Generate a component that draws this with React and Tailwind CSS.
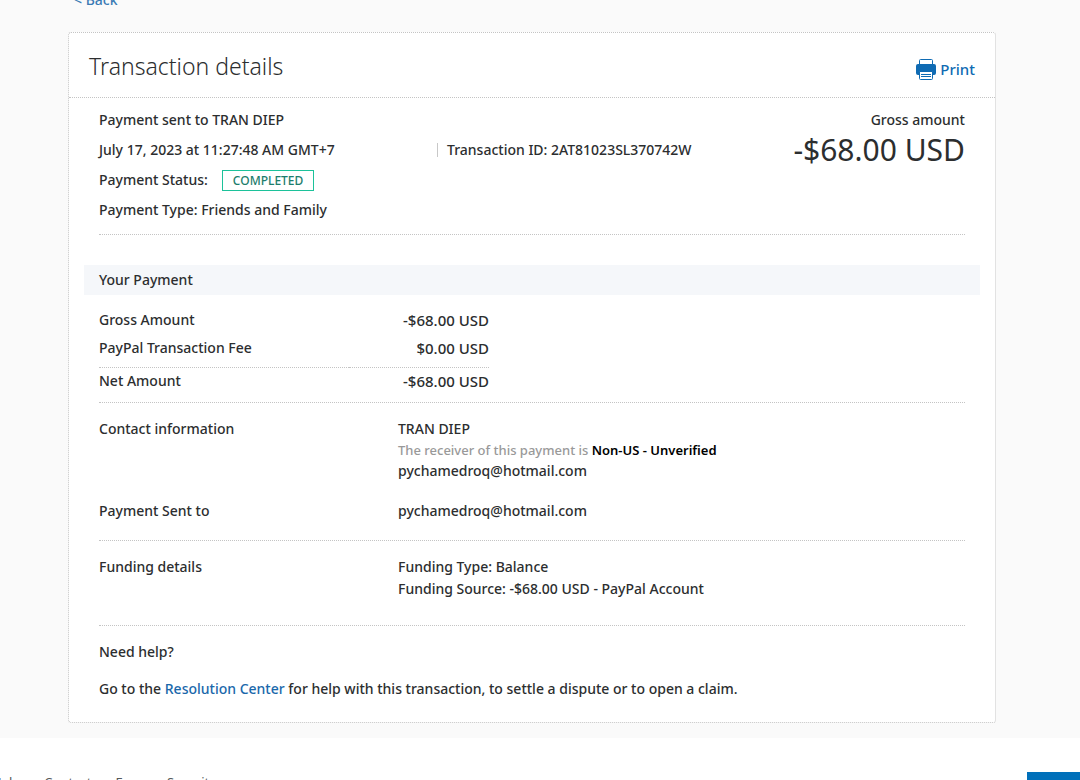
const payment = [
  { label: "Gross Amount", value: "-$68.00 USD" },
  { label: "PayPal Transaction Fee", value: "$0.00 USD" },
];

const footerLinks = ["Help", "Contact", "Fees", "Security"];

export default function App() {
  return (
    <div className="h-screen overflow-hidden bg-white font-['Noto_Sans',sans-serif] text-[14px] leading-5 font-medium text-[#2c2e2f]">
      <main className="bg-[#fafafa] pl-[68px] pr-[84px] pb-[15px]">
        <nav className="-mt-2.5 pl-1.5 pb-[22px]">
          <a href="#back" className="block w-fit text-[#3b7bb5]">&lt; Back</a>
        </nav>

        <section className="rounded-[3px] border border-dotted border-[#c4c4c4] border-r-[#e2e2e2] [border-right-style:solid] bg-white">
          <header className="flex h-[65px] items-center justify-between border-b border-dotted border-[#c4c4c4] px-5">
            <h1 className="pt-0.5 text-[23px] leading-8 font-light">Transaction details</h1>
            <button type="button" className="flex items-center gap-1 pt-2 text-[15px] text-[#0f6bb3]">
              <PrinterIcon />
              Print
            </button>
          </header>

          <div className="px-[30px] pt-3 pb-[23px]">
            <Summary />
            <YourPayment />
            <Contact />
            <Funding />

            <div className="pt-4">
              <h2>Need help?</h2>
              <p className="mt-[17px]">
                Go to the <a href="#resolution" className="text-[#1a68ab]">Resolution Center</a> for help with this transaction, to settle a dispute or to open a claim.
              </p>
            </div>
          </div>
        </section>
      </main>

      <footer className="flex justify-between pt-[34px]">
        <ul className="-ml-2 flex gap-6 text-[13px] font-normal text-[#55585a]">
          {footerLinks.map(name => (
            <li key={name}><a href="#footer">{name}</a></li>
          ))}
        </ul>
        <div className="h-10 w-[53px] bg-[#0070ba]" />
      </footer>
    </div>
  );
}

function Summary() {
  return (
    <div className="flex justify-between border-b border-dotted border-[#c4c4c4] pb-[14px]">
      <div className="flex flex-col gap-2.5">
        <p>Payment sent to TRAN DIEP</p>
        <div className="flex">
          <p className="w-[338px]">July 17, 2023 at 11:27:48 AM GMT+7</p>
          <p className="flex items-center gap-[9px]">
            <span className="h-3.5 w-px bg-[#c8c8c8]" />
            Transaction ID: 2AT81023SL370742W
          </p>
        </div>
        <p className="flex h-5 items-center">
          Payment Status:
          <span className="ml-3.5 border border-[#1cc29a] px-2.5 text-[12px] leading-[19px] text-[#1d7d6c]">COMPLETED</span>
        </p>
        <p>Payment Type: Friends and Family</p>
      </div>
      <div className="text-right">
        <p>Gross amount</p>
        <p className="text-[30px] leading-10 font-normal">-$68.00 USD</p>
      </div>
    </div>
  );
}

function YourPayment() {
  return (
    <div className="border-b border-dotted border-[#c4c4c4] pt-[30px] pb-[7px]">
      <h2 className="-mx-[15px] bg-[#f5f7fa] px-[15px] py-[5px]">Your Payment</h2>
      <table className="mt-[11px] w-[390px]">
        <tbody>
          {payment.map(p => (
            <tr key={p.label}>
              <th scope="row" className="h-7 text-left font-medium">{p.label}</th>
              <td className="text-right text-[15px]">{p.value}</td>
            </tr>
          ))}
        </tbody>
        <tfoot>
          <tr><td colSpan={2} className="h-[5px] border-b border-dotted border-[#c4c4c4]" /></tr>
          <tr>
            <th scope="row" className="h-7 text-left font-medium">Net Amount</th>
            <td className="text-right text-[15px]">-$68.00 USD</td>
          </tr>
        </tfoot>
      </table>
    </div>
  );
}

function Contact() {
  return (
    <div className="border-b border-dotted border-[#c4c4c4] pt-4 pb-[19px]">
      <Row label="Contact information">
        <p>TRAN DIEP</p>
        <p className="text-[13px] leading-[22px] text-[#999999]">
          The receiver of this payment is <strong className="font-semibold text-black">Non-US - Unverified</strong>
        </p>
        <p>pychamedroq@hotmail.com</p>
      </Row>
      <div className="mt-5">
        <Row label="Payment Sent to">pychamedroq@hotmail.com</Row>
      </div>
    </div>
  );
}

function Funding() {
  return (
    <div className="border-b border-dotted border-[#c4c4c4] pt-4 pb-[26px]">
      <Row label="Funding details">
        <p>Funding Type: Balance</p>
        <p className="mt-0.5">Funding Source: -$68.00 USD - PayPal Account</p>
      </Row>
    </div>
  );
}

function Row({ label, children }) {
  return (
    <div className="flex">
      <h3 className="w-[299px] shrink-0">{label}</h3>
      <div>{children}</div>
    </div>
  );
}

function PrinterIcon() {
  return (
    <svg width="20" height="21" viewBox="0 0 20 21" fill="none" aria-hidden="true">
      <path d="M3.5 6V1.5Q3.5.5 4.5.5h11q1 0 1 1V6" stroke="#0f6bb3" />
      <path d="M2 5h16q2 0 2 2v7q0 2-2 2H2q-2 0-2-2V7q0-2 2-2Z" fill="#0f6bb3" />
      <path d="M3.5 12.5h13v7q0 1-1 1h-11q-1 0-1-1Z" fill="#fff" stroke="#0f6bb3" />
      <path d="M5 15.5h10M5 17.5h10" stroke="#0f6bb3" />
    </svg>
  );
}
